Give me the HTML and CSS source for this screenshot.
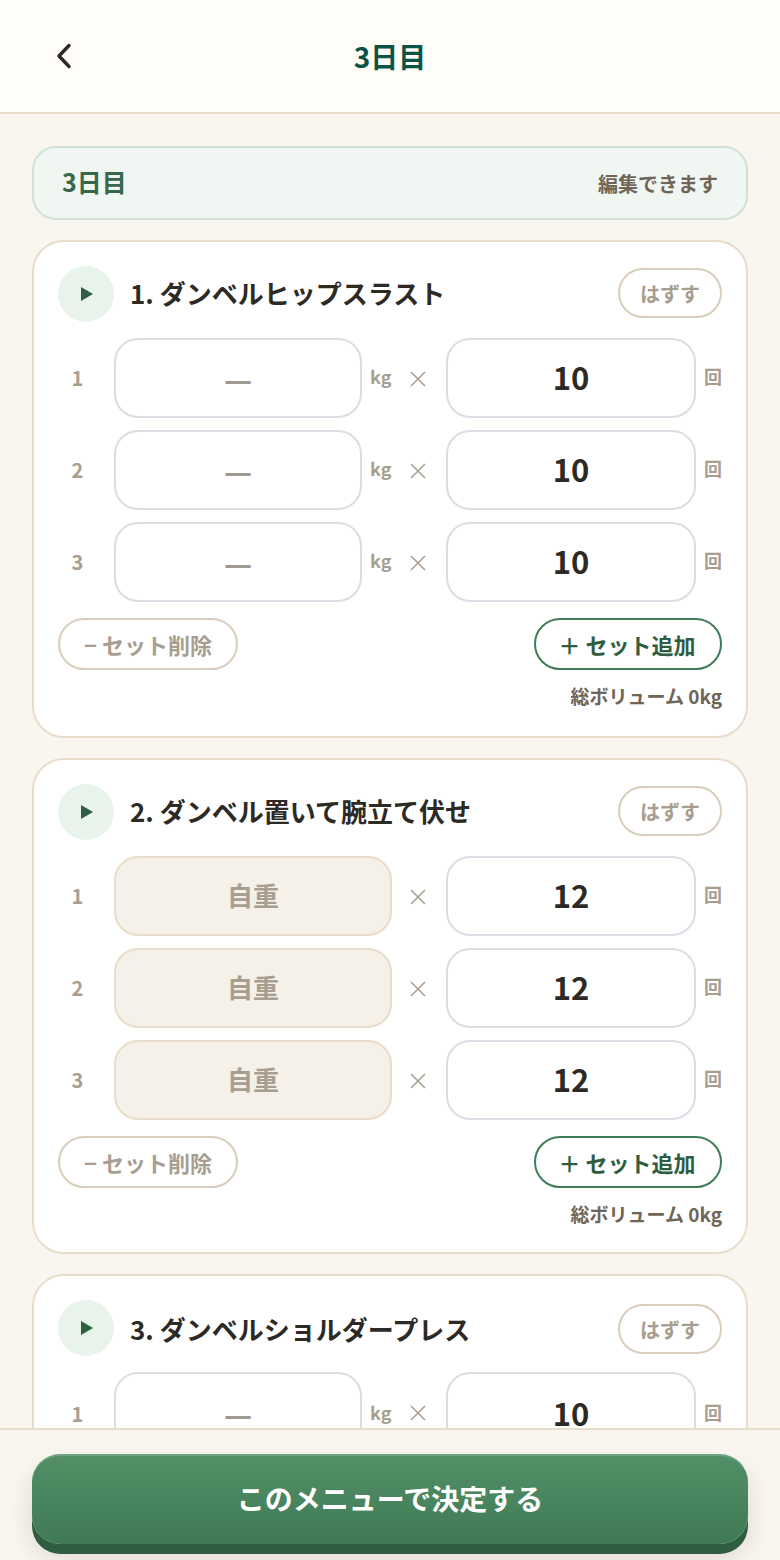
FILE: index.html
```html
<!DOCTYPE html>
<html lang="ja">
<head>
  <meta charset="UTF-8">
  <title>3日目</title>
  <link rel="stylesheet" href="styles.css">
</head>
<body>
  <header class="topbar">
    <button class="back" type="button" aria-label="戻る">
      <svg viewBox="0 0 24 32" width="24" height="32"><path d="M17 4.5 L7 15 L17 25.5" fill="none" stroke="#2d2a26" stroke-width="3.4" stroke-linecap="round" stroke-linejoin="round"/></svg>
    </button>
    <h1>3日目</h1>
  </header>

  <main class="content">
    <div class="banner">
      <span class="banner-day">3日目</span>
      <span class="banner-note">編集できます</span>
    </div>

    <section class="card">
      <div class="card-head">
        <span class="play"><svg viewBox="0 0 12 14" width="12" height="14"><path d="M0 0 L12 7 L0 14 Z" fill="#2f5d3f"/></svg></span>
        <h2>1. ダンベルヒップスラスト</h2>
        <button class="remove" type="button">はずす</button>
      </div>
      <div class="row">
        <span class="num">1</span>
        <div class="field empty">—</div><span class="unit">kg</span>
        <span class="times"><svg viewBox="0 0 16 16" width="16" height="16"><path d="M1 1 L15 15 M15 1 L1 15" stroke="#a89e90" stroke-width="1.5" fill="none"/></svg></span>
        <div class="field reps">10</div><span class="unit kai">回</span>
      </div>
      <div class="row">
        <span class="num">2</span>
        <div class="field empty">—</div><span class="unit">kg</span>
        <span class="times"><svg viewBox="0 0 16 16" width="16" height="16"><path d="M1 1 L15 15 M15 1 L1 15" stroke="#a89e90" stroke-width="1.5" fill="none"/></svg></span>
        <div class="field reps">10</div><span class="unit kai">回</span>
      </div>
      <div class="row">
        <span class="num">3</span>
        <div class="field empty">—</div><span class="unit">kg</span>
        <span class="times"><svg viewBox="0 0 16 16" width="16" height="16"><path d="M1 1 L15 15 M15 1 L1 15" stroke="#a89e90" stroke-width="1.5" fill="none"/></svg></span>
        <div class="field reps">10</div><span class="unit kai">回</span>
      </div>
      <div class="actions">
        <button class="pill minus" type="button">− セット削除</button>
        <button class="pill plus" type="button">＋ セット追加</button>
      </div>
      <p class="total">総ボリューム 0kg</p>
    </section>

    <section class="card">
      <div class="card-head">
        <span class="play"><svg viewBox="0 0 12 14" width="12" height="14"><path d="M0 0 L12 7 L0 14 Z" fill="#2f5d3f"/></svg></span>
        <h2>2. ダンベル置いて腕立て伏せ</h2>
        <button class="remove" type="button">はずす</button>
      </div>
      <div class="row">
        <span class="num">1</span>
        <div class="field body">自重</div>
        <span class="times"><svg viewBox="0 0 16 16" width="16" height="16"><path d="M1 1 L15 15 M15 1 L1 15" stroke="#a89e90" stroke-width="1.5" fill="none"/></svg></span>
        <div class="field reps">12</div><span class="unit kai">回</span>
      </div>
      <div class="row">
        <span class="num">2</span>
        <div class="field body">自重</div>
        <span class="times"><svg viewBox="0 0 16 16" width="16" height="16"><path d="M1 1 L15 15 M15 1 L1 15" stroke="#a89e90" stroke-width="1.5" fill="none"/></svg></span>
        <div class="field reps">12</div><span class="unit kai">回</span>
      </div>
      <div class="row">
        <span class="num">3</span>
        <div class="field body">自重</div>
        <span class="times"><svg viewBox="0 0 16 16" width="16" height="16"><path d="M1 1 L15 15 M15 1 L1 15" stroke="#a89e90" stroke-width="1.5" fill="none"/></svg></span>
        <div class="field reps">12</div><span class="unit kai">回</span>
      </div>
      <div class="actions">
        <button class="pill minus" type="button">− セット削除</button>
        <button class="pill plus" type="button">＋ セット追加</button>
      </div>
      <p class="total">総ボリューム 0kg</p>
    </section>

    <section class="card">
      <div class="card-head">
        <span class="play"><svg viewBox="0 0 12 14" width="12" height="14"><path d="M0 0 L12 7 L0 14 Z" fill="#2f5d3f"/></svg></span>
        <h2>3. ダンベルショルダープレス</h2>
        <button class="remove" type="button">はずす</button>
      </div>
      <div class="row">
        <span class="num">1</span>
        <div class="field empty">—</div><span class="unit">kg</span>
        <span class="times"><svg viewBox="0 0 16 16" width="16" height="16"><path d="M1 1 L15 15 M15 1 L1 15" stroke="#a89e90" stroke-width="1.5" fill="none"/></svg></span>
        <div class="field reps">10</div><span class="unit kai">回</span>
      </div>
    </section>
  </main>

  <footer class="footer">
    <button class="confirm" type="button">このメニューで決定する</button>
  </footer>
</body>
</html>
```

FILE: styles.css
```css
* {
  margin: 0;
  padding: 0;
  box-sizing: border-box;
}
html, body {
  height: 1560px;
  overflow: hidden;
}
body {
  background-color: #f9f5ef;
  color: #2d2a26;
  font-family: "Noto Sans CJK JP", "Noto Sans", sans-serif;
  font-weight: 700;
}
button {
  font-family: inherit;
  font-weight: 700;
  background: none;
  cursor: pointer;
}

.topbar {
  display: flex;
  align-items: center;
  justify-content: center;
  position: relative;
  height: 114px;
  background-color: #fffdf8;
  border-bottom: 2px solid #e8dccb;
}
.topbar h1 {
  font-size: 28px;
  color: #0b5345;
}
.back {
  position: absolute;
  left: 52px;
  top: 41px;
  width: 24px;
  height: 32px;
  border: none;
}

.content {
  display: flex;
  flex-direction: column;
  gap: 20px;
  padding: 32px 32px 0;
}
.banner {
  display: flex;
  align-items: center;
  justify-content: space-between;
  height: 74px;
  padding: 0 28px;
  background-color: #f0f6f1;
  border: 2px solid #cfe2d5;
  border-radius: 24px;
}
.banner-day {
  margin-bottom: 4px;
  font-size: 25px;
  color: #376849;
}
.banner-note {
  font-size: 20px;
  color: #6f6557;
}

.card {
  flex: none;
  padding: 24px;
  background-color: #fff;
  border: 2px solid #e8dccb;
  border-radius: 32px;
}
.card:first-of-type {
  padding-bottom: 26px;
}
.card-head {
  display: flex;
  align-items: center;
  height: 56px;
  margin-bottom: 16px;
}
.play {
  display: flex;
  align-items: center;
  justify-content: center;
  flex: none;
  width: 56px;
  height: 56px;
  padding-left: 2px;
  margin-right: 16px;
  border-radius: 50%;
  background-color: #e8f3ec;
}
.card-head h2 {
  flex: 1;
  margin-bottom: 4px;
  font-size: 26px;
  color: #2d2a26;
}
.remove {
  width: 104px;
  height: 50px;
  margin-bottom: 2px;
  font-size: 20px;
  color: #a89e90;
  border: 2px solid #d9cdbc;
  border-radius: 25px;
}
.card:last-of-type h2 {
  margin-bottom: 0;
}
.card:last-of-type .remove {
  margin-bottom: 0;
  margin-top: 2px;
}

.row {
  display: flex;
  align-items: center;
  height: 80px;
  margin-bottom: 12px;
}
.num {
  flex: none;
  width: 56px;
  padding-right: 17px;
  padding-bottom: 2px;
  text-align: center;
  font-size: 20px;
  color: #a89e90;
}
.field {
  display: flex;
  align-items: center;
  justify-content: center;
  flex: none;
  height: 80px;
  padding-bottom: 4px;
  border-radius: 24px;
}
.empty {
  width: 248px;
  padding-bottom: 2px;
  font-size: 31px;
  color: #a09a90;
  border: 2px solid #dadde3;
}
.body {
  width: 278px;
  font-size: 26px;
  color: #a89e90;
  background-color: #f5f0e8;
  border: 2px solid #e8dccb;
}
.reps {
  width: 250px;
  font-size: 31px;
  color: #2d2a26;
  border: 2px solid #dadde3;
}
.unit {
  flex: none;
  width: 30px;
  margin-left: 8px;
  margin-bottom: 4px;
  font-size: 18px;
  color: #a89e90;
}
.kai {
  width: 18px;
  font-size: 18px;
}
.times {
  display: flex;
  justify-content: center;
  flex: none;
  width: 46px;
  padding-right: 10px;
  padding-top: 2px;
}
.field.body + .times {
  width: 54px;
  padding-right: 2px;
}
.card:last-of-type .num {
  padding-bottom: 0;
  padding-top: 2px;
}
.card:last-of-type .unit {
  margin-bottom: 0;
}
.card:last-of-type .reps,
.card:last-of-type .empty {
  padding-bottom: 0;
}

.actions {
  display: flex;
  justify-content: space-between;
  margin-top: 16px;
}
.pill {
  height: 52px;
  font-size: 22px;
  border-radius: 26px;
}
.minus {
  width: 180px;
  color: #a89e90;
  border: 2px solid #d9cdbc;
}
.plus {
  width: 188px;
  padding-right: 2px;
  color: #2f5d3f;
  border: 2px solid #3f7d58;
}
.total {
  margin-top: 12px;
  line-height: 28px;
  text-align: right;
  font-size: 19px;
  color: #6f6557;
}

.footer {
  position: fixed;
  left: 0;
  right: 0;
  bottom: 0;
  height: 132px;
  padding: 24px 32px 0;
  background-color: #f9f5ef;
  border-top: 2px solid #e8dccb;
}
.confirm {
  display: block;
  width: 100%;
  height: 90px;
  padding-bottom: 4px;
  font-size: 28px;
  color: #fff;
  border: none;
  border-top: 2px solid #6fa483;
  border-radius: 28px;
  background: linear-gradient(#528f66, #3f7a55);
  box-shadow: 0 10px 0 #2f5d3f, 0 14px 24px rgba(60, 50, 30, 0.14);
}
```
